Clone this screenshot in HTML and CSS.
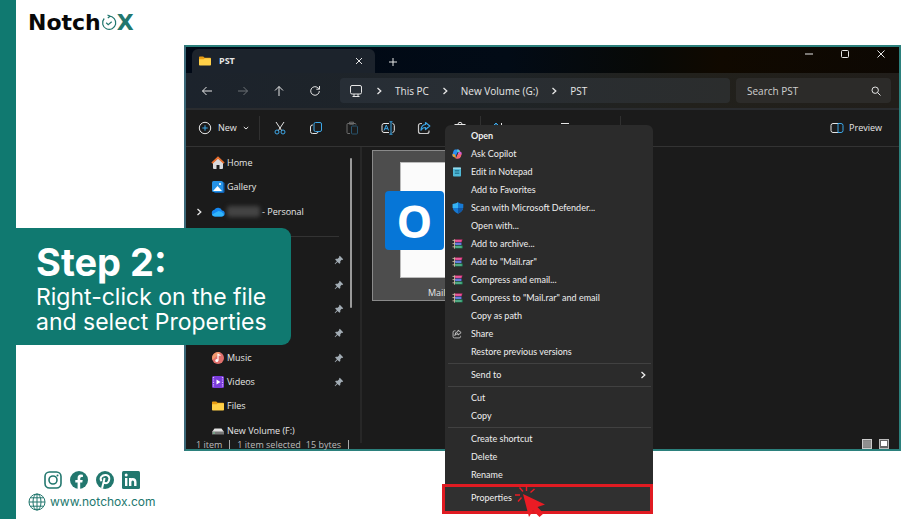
FILE: index.html
```html
<!DOCTYPE html>
<html lang="en">
<head>
<meta charset="utf-8">
<title>NotchoX - Step 2</title>
<link rel="stylesheet" href="styles.css">
</head>
<body>
<svg class="defs" aria-hidden="true">
  <symbol id="chev" viewBox="0 0 8 8"><path d="M2.500 1 5.800 4 2.500 7" fill="none" stroke="currentColor" stroke-width="1.300"/></symbol>
  <symbol id="folder" viewBox="0 0 12 10"><path d="M0 1.200Q0 .4.8.4h3.400l1.400 1.400h5.600q.8 0 .8.8V5H0z" fill="#e89c12"/><path d="M0 3.200h4.600l1.200-1h5.400q.8 0 .8.8v5.800q0 .8-.8.8H.8Q0 9.600 0 8.800z" fill="#ffd048"/></symbol>
  <symbol id="pin" viewBox="0 0 10 10"><path d="M5.800.8 9.200 4.200 8.400 4.900 7.700 4.800 6.300 6.300 6.300 8.100 5.400 8.800 3.500 6.900 1.100 9.200.7 8.800 2.900 6.300 1.100 4.500 1.900 3.700 3.700 3.700 5.200 2.200 5.100 1.500z" fill="#a3adb5"/></symbol>
  <symbol id="rar" viewBox="0 0 11 10"><path d="M3 .6h7.500l-1 2.600H3z" fill="#e0307c"/><path d="M3 3.600h6.500v2.500H3z" fill="#3b63d8"/><path d="M3 6.600h7.500v2.700H3z" fill="#1f9f66"/><path d="M4 1.900h5.200M4 5h5.200M4 8h5.500" stroke="#e8c7e0" stroke-width=".5"/><path d="M2.500.3v9.400M.5 1.400h3M.5 4.600h3M.5 7.800h3" stroke="#cdb9a6" stroke-width=".9"/></symbol>
  <symbol id="share" viewBox="0 0 14 14"><path d="M5 2.500H3.500a2 2 0 0 0-2 2v6a2 2 0 0 0 2 2h6.500a2 2 0 0 0 2-2V9.500" fill="none" stroke="#c8c8c8" stroke-width="1.200"/><path d="M8.500 1.500 12.800 5 8.500 8.500V6.500Q5.500 6.500 4 9.200 4.200 3.800 8.500 3.500z" fill="none" stroke="var(--accent)" stroke-width="1.200" stroke-linejoin="round"/></symbol>
</svg>
<div class="page">
  <header class="brand" aria-label="NotchoX">
    <span class="brand-name">Notch</span>
    <svg class="brand-clock" viewBox="0 0 16 16"><path d="M8 1.200A6.600 6.600 0 1 1 3 3.700" fill="none" stroke="#22776e" stroke-width="1.200"/><path d="M6.500 0 9 1.300 6.800 3M5.200 7.800l2 1.900 3.500-3" fill="none" stroke="#22776e" stroke-width="1.200"/><path d="M2.400 5.500 3 3.700" stroke="#22776e"/></svg>
    <span class="brand-x">X</span>
  </header>

  <main class="window">
    <div class="titlebar">
      <div class="tab">
        <svg class="i12"><use href="#folder"/></svg><strong>PST</strong>
        <button class="tab-close" aria-label="Close tab"><svg class="i8 line" viewBox="0 0 8 8"><path d="m1 1 6 6M7 1 1 7"/></svg></button>
      </div>
      <button class="tab-new" aria-label="New tab"><svg class="i8 line" viewBox="0 0 8 8"><path d="M4 0v8M0 4h8"/></svg></button>
      <div class="controls">
        <button aria-label="Minimize"><svg class="i8 line" viewBox="0 0 8 8"><path d="M0 4h8"/></svg></button>
        <button aria-label="Maximize"><svg class="i8 line" viewBox="0 0 8 8"><rect x=".5" y=".5" width="7" height="7" rx="1"/></svg></button>
        <button aria-label="Close"><svg class="i8 line" viewBox="0 0 8 8"><path d="m.5.5 7 7M7.500.5l-7 7"/></svg></button>
      </div>
    </div>

    <nav class="navbar" aria-label="Location">
      <div class="arrows">
        <button aria-label="Back"><svg class="i12 line" viewBox="0 0 12 12"><path d="M11 6H1.500M5.500 2l-4 4 4 4"/></svg></button>
        <button aria-label="Forward" class="dim"><svg class="i12 line" viewBox="0 0 12 12"><path d="M1 6h9.500M6.500 2l4 4-4 4"/></svg></button>
        <button aria-label="Up"><svg class="i12 line" viewBox="0 0 12 12"><path d="M6 11V1.500M2 5.500l4-4 4 4"/></svg></button>
        <button aria-label="Refresh"><svg class="i12 line" viewBox="0 0 12 12"><path d="M10.300 6A4.300 4.300 0 1 1 8.800 2.700L10.300 4M10.500 1v3.200H7.300"/></svg></button>
      </div>
      <div class="address">
        <svg class="i14 line" viewBox="0 0 14 14"><rect x="1.500" y="1.500" width="11" height="8.500" rx="1.500"/><path d="M5 10v2M9 10v2M3.500 12.500h7"/></svg>
        <svg class="i8"><use href="#chev"/></svg><a href="#pc">This PC</a>
        <svg class="i8"><use href="#chev"/></svg><a href="#g">New Volume (G:)</a>
        <svg class="i8"><use href="#chev"/></svg><a href="#pst">PST</a>
      </div>
      <div class="search">
        <input type="search" aria-label="Search PST" placeholder="Search PST">
        <svg class="i10 line" viewBox="0 0 10 10"><circle cx="4.200" cy="4.200" r="3.200"/><path d="m6.600 6.600 2.900 2.900"/></svg>
      </div>
    </nav>

    <div class="toolbar">
      <button class="new"><svg class="i14 line" viewBox="0 0 14 14"><circle cx="7" cy="7" r="5.700"/><path class="blue" d="M7 4.300v5.400M4.300 7h5.400"/></svg>New<svg class="i6 line" viewBox="0 0 6 6"><path d="m.8 2 2.200 2 2.200-2"/></svg></button>
      <div class="tools">
        <button aria-label="Cut"><svg class="i14 line" viewBox="0 0 14 14"><path d="m3 1 5.800 8.800M11 1 5.200 9.800"/><g class="blue"><circle cx="4" cy="11" r="2"/><circle cx="10" cy="11" r="2"/></g></svg></button>
        <button aria-label="Copy"><svg class="i14 line" viewBox="0 0 14 14"><path d="M4 4H3.500a2 2 0 0 0-2 2v4.500a2 2 0 0 0 2 2H7a2 2 0 0 0 2-1.500"/><rect class="blue" x="5" y="1.500" width="7.500" height="9" rx="1.500"/></svg></button>
        <button aria-label="Paste" class="dim"><svg class="i14 line" viewBox="0 0 14 14"><path d="M5 12.500H3a1 1 0 0 1-1-1V3.500a1 1 0 0 1 1-1h7a1 1 0 0 1 1 1M4.500 1.200h4v2h-4z"/><rect class="blue" x="6.500" y="5" width="6" height="8" rx="1"/></svg></button>
        <button aria-label="Rename"><svg class="i14 line" viewBox="0 0 14 14"><path d="M8 2.500H3a2 2 0 0 0-2 2v5a2 2 0 0 0 2 2h5M11.500 2.500q1.800.3 1.800 2v5q0 1.700-1.800 2"/><path class="blue" d="M8.500.8h3M10 .8v12.400M8.500 13.200h3M3 9.500 5.300 4l2.300 5.500M3.800 7.700h3"/></svg></button>
        <button aria-label="Share"><svg class="i14 shareblue"><use href="#share"/></svg></button>
        <button aria-label="Delete"><svg class="i14 line" viewBox="0 0 14 14"><path d="M1.500 3.500h11M5 3.300a2 2 0 0 1 4 0M3 3.500l1 9h6l1-9"/></svg></button>
      </div>
      <div class="tools more">
        <button aria-label="Sort"><svg class="i14 line" viewBox="0 0 14 14"><path class="blue" d="M4 12V2L1.500 4.500M4 2l2.500 2.500"/><path d="M9.500 2v10"/></svg></button>
        <button aria-label="View"><svg class="i14 line" viewBox="0 0 14 14"><path d="M3 2.500h8M3 6.500h8M3 10.500h8"/></svg></button>
      </div>
      <button class="preview"><svg class="i14 line" viewBox="0 0 14 14"><path d="M8 2.500H3a2 2 0 0 0-2 2v5a2 2 0 0 0 2 2h5"/><path class="blue" d="M8 2.500h3a2 2 0 0 1 2 2v5a2 2 0 0 1-2 2H8z"/></svg>Preview</button>
    </div>

    <div class="body">
      <aside class="side">
        <ul>
          <li><svg class="i14" viewBox="0 0 14 14"><path d="M2 6.500 7 2l5 4.500V12q0 1-1 1H8.500V9h-3v4H3q-1 0-1-1z" fill="#d9d9dc"/><path d="M1 7.200 7 1.600l6 5.600" fill="none" stroke="#e96f2f" stroke-width="1.800"/></svg>Home</li>
          <li><svg class="i14" viewBox="0 0 14 14"><rect x="3" y="2" width="10.500" height="11" rx="1.500" fill="#1260b0"/><rect x="1" y="1" width="11" height="11" rx="1.500" fill="#2492e6"/><path d="m2 11 4.500-5L11 11z" fill="#fff"/><circle cx="9" cy="4" r="1" fill="#fff"/></svg>Gallery</li>
          <li><svg class="i8 expand"><use href="#chev"/></svg><svg class="i14" viewBox="0 0 14 14"><path d="M4 11.500a3.400 3.400 0 0 1-.6-6.700A4.200 4.200 0 0 1 11 5.500a3 3 0 0 1-.5 6z" fill="#1487f0"/><path d="M4 11.500q-2.500 0-3-2L7.500 6q3 0 5.500 3-.4 2.500-2.500 2.500z" fill="#31b5fb"/></svg><span class="redacted"></span>- Personal</li>
          <li class="rule"></li>
          <li><svg class="i10 pin"><use href="#pin"/></svg></li>
          <li><svg class="i10 pin"><use href="#pin"/></svg></li>
          <li><svg class="i10 pin"><use href="#pin"/></svg></li>
          <li><svg class="i10 pin"><use href="#pin"/></svg></li>
          <li><svg class="i14" viewBox="0 0 14 14"><circle cx="7" cy="7" r="6" fill="#df706c"/><path d="M1.500 9a6 6 0 0 1 8-7.400z" fill="#f09a6d"/><path d="M7 9.500V3.500l2.500 1" fill="none" stroke="#fff" stroke-width="1.200"/><circle cx="5.800" cy="9.500" r="1.500" fill="#fff"/></svg>Music<svg class="i10 pin"><use href="#pin"/></svg></li>
          <li><svg class="i14" viewBox="0 0 14 14"><rect x="1" y="1" width="12" height="12" rx="1.500" fill="#7b3ddb"/><path d="M2.500 2v10M11.500 2v10" stroke="#d9b8ff" stroke-width="1.200" stroke-dasharray="1.200 1.200"/><path d="m5.500 4.500 4 2.500-4 2.500z" fill="#fff"/></svg>Videos<svg class="i10 pin"><use href="#pin"/></svg></li>
          <li><svg class="i12 files"><use href="#folder"/></svg>Files</li>
          <li><svg class="i14" viewBox="0 0 14 14"><path d="M3.500 4.500h7L13 8H1z" fill="#e3e3e3"/><path d="M1 7.500h12v3H1z" fill="#777"/><path d="M2 9h2" stroke="#7bcf9c"/></svg>New Volume (F:)</li>
        </ul>
        <div class="scroll"></div>
      </aside>
      <section class="files-pane">
        <figure class="file">
          <div class="sheet"><span class="outlook">O</span></div>
          <figcaption>Mail.pst</figcaption>
        </figure>
      </section>
    </div>
    <footer class="status">
      <span>1 item</span><i></i><span>1 item selected</span><span class="bytes">15 bytes</span><i></i>
      <svg class="i10 views" viewBox="0 0 10 10"><rect x=".5" y=".5" width="9" height="9" fill="#858585" stroke="#ccc"/><path d="M1 3h8M1 5h8M1 7h8" stroke="#aaa" stroke-width=".6"/></svg>
      <svg class="i10" viewBox="0 0 10 10"><rect x=".5" y=".5" width="9" height="9" fill="#666" stroke="#bbb"/><rect x="2" y="2" width="6" height="5" fill="#fff"/></svg>
    </footer>

    <div class="menu" role="menu">
      <button role="menuitem"><b>Open</b></button>
      <button role="menuitem"><svg class="i10" viewBox="0 0 10 10"><path d="M3 .5h3.500L5 5.500 3.500 8H2Q0 8 .3 6L1.500 2Q2 .5 3 .5z" fill="#2a8ff0"/><path d="M6 .5q1.500 0 2 2L9 3q1 .3.700 2L8.500 8Q8 9.500 6.500 9.500H4L6.500 3z" fill="#d85bd0"/><path d="M.5 5 3 5.500 4 9.500Q2.500 9 2.500 8 .3 8 .5 5z" fill="#f6a329"/><path d="M5 .5q2.500 0 3 2L5.500 4z" fill="#53d0d0"/><path d="m6 5 3.500.5-1 2.500L6 9.500H4z" fill="#f36b62"/><path d="M5.600 3.300 6.500 3 4.700 6.800 3.700 7z" fill="#2b2b2b"/></svg>Ask Copilot</button>
      <button role="menuitem"><svg class="i10" viewBox="0 0 10 10"><rect x="1" y=".5" width="8" height="9" rx=".8" fill="#4fb9d8"/><path d="M1 1.200h8" stroke="#b9e8f4"/><path d="M2.800 3.500h4.500M2.800 5h4.500M2.800 6.500h4.500" stroke="#17627e" stroke-width=".7"/></svg>Edit in Notepad</button>
      <button role="menuitem">Add to Favorites</button>
      <button role="menuitem"><svg class="i12" viewBox="0 0 12 12"><path d="M6 .3Q8 1.800 11.300 2v3.500Q11 9.500 6 11.700 1 9.500.7 5.500V2Q4 1.800 6 .3z" fill="#1679d3"/><path d="M6 .3V6H.7V2Q4 1.800 6 .3z" fill="#36b2f2"/><path d="M6 6h5.200Q10.500 9.700 6 11.700z" fill="#1257a3"/></svg>Scan with Microsoft Defender...</button>
      <button role="menuitem">Open with...</button>
      <button role="menuitem"><svg class="i11"><use href="#rar"/></svg>Add to archive...</button>
      <button role="menuitem"><svg class="i11"><use href="#rar"/></svg>Add to "Mail.rar"</button>
      <button role="menuitem"><svg class="i11"><use href="#rar"/></svg>Compress and email...</button>
      <button role="menuitem"><svg class="i11"><use href="#rar"/></svg>Compress to "Mail.rar" and email</button>
      <button role="menuitem">Copy as path</button>
      <button role="menuitem"><svg class="i10"><use href="#share"/></svg>Share</button>
      <button role="menuitem">Restore previous versions</button>
      <hr>
      <button role="menuitem">Send to<svg class="i8 sub"><use href="#chev"/></svg></button>
      <hr>
      <button role="menuitem">Cut</button>
      <button role="menuitem">Copy</button>
      <hr>
      <button role="menuitem">Create shortcut</button>
      <button role="menuitem">Delete</button>
      <button role="menuitem">Rename</button>
      <button role="menuitem" class="target">Properties
        <svg class="cursor" viewBox="0 0 30 32"><path d="M8 8 30 18.500 22.500 21 28.500 27.500 24.500 31 18 24.500 14 31z" fill="#ea1c24"/><path d="M11.500 0V5M4.500 1.500 8 5.500M19.500 3l-4 3.500M0 9h5M6.500 11.500 3 15.500" fill="none" stroke="#ea1c24" stroke-width="1.400"/></svg></button>
    </div>
  </main>

  <footer class="contact">
    <div class="social">
      <a href="#instagram" aria-label="Instagram"><svg class="i18" viewBox="0 0 18 18"><rect x="1" y="1" width="16" height="16" rx="4.500" fill="none" stroke="#22776e" stroke-width="1.600"/><circle cx="9" cy="9" r="4" fill="none" stroke="#22776e" stroke-width="1.600"/><circle cx="13.500" cy="4.500" r="1" fill="#22776e"/></svg></a>
      <a href="#facebook" aria-label="Facebook"><svg class="i18" viewBox="0 0 18 18"><circle cx="9" cy="9" r="9" fill="#22776e"/><path d="M7.600 18v-6.400H5.300V9h2.300V7q0-3.500 3.300-3.500l2 .2v2.200h-1.300q-1.400 0-1.400 1.500V9h2.500l-.4 2.600h-2.100V18z" fill="#fff"/></svg></a>
      <a href="#pinterest" aria-label="Pinterest"><svg class="i18" viewBox="0 0 18 18"><circle cx="9" cy="9" r="9" fill="#22776e"/><path d="M6 17.500 8.600 7M5.600 10.200Q3.800 8 5.300 5.800 7 3.700 9.800 3.900q3.700.5 3.500 4-.5 4.200-3.300 4.300-1.700 0-2.300-1.300" fill="none" stroke="#fff" stroke-width="2"/></svg></a>
      <a href="#linkedin" aria-label="LinkedIn"><svg class="i18" viewBox="0 0 18 18"><rect width="18" height="18" rx="1.500" fill="#22776e"/><path d="M4.200 7v8M8.200 7v8M8.200 11q0-2.800 2.500-2.800T13.300 11v4" fill="none" stroke="#fff" stroke-width="2.400"/><circle cx="4.200" cy="4.100" r="1.500" fill="#fff"/></svg></a>
    </div>
    <a class="site" href="#site"><svg class="i18" viewBox="0 0 18 18"><g fill="none" stroke="#22776e"><circle cx="9" cy="9" r="8"/><ellipse cx="9" cy="9" rx="4" ry="8"/><path d="M9 1v16M1 9h16M2.500 4.800h13M2.500 13.200h13"/></g></svg>www.notchox.com</a>
  </footer>

  <section class="step">
    <h1>Step 2:</h1>
    <p>Right-click on the file<br>and select Properties</p>
  </section>
</div>
</body>
</html>
```
FILE: styles.css
```css
* { box-sizing: border-box; }
body { margin: 0; background: #fff; font-family: "Open Sans", "Noto Sans", sans-serif; font-size: 10px; line-height: 14px; color: #e6e6e6; }
button { background: none; border: 0; padding: 0; margin: 0; font: inherit; color: inherit; display: flex; align-items: center; }
a { color: inherit; text-decoration: none; }
ul { list-style: none; margin: 0; padding: 0; }
svg { flex: none; display: block; overflow: visible; }
.defs { position: absolute; width: 0; height: 0; }
.i6 { width: 6px; height: 6px; }
.i8 { width: 8px; height: 8px; }
.i10 { width: 10px; height: 10px; }
.i11 { width: 11px; height: 10px; }
.i12 { width: 12px; height: 12px; }
.i14 { width: 14px; height: 14px; }
.i18 { width: 18px; height: 18px; }
.line { fill: none; stroke: currentColor; }

.page { --accent: #ddd; position: relative; min-height: 100vh; display: flex; flex-direction: column; border-left: 16px solid #107970; }

.brand { height: 45px; padding-left: 12px; display: flex; align-items: center; font-family: "DejaVu Sans", sans-serif; font-weight: bold; font-size: 22px; line-height: 24px; color: #080808; }
.brand-clock { width: 16px; height: 16px; }
.brand-x { color: #22776e; }

.window { position: relative; flex: 1; min-height: 0; margin: 0 21px 0 168px; border: 2px solid #2b807c; border-left-color: #3b6878; background: #1b1b1b; display: flex; flex-direction: column; }
.titlebar { height: 26px; display: flex; background: linear-gradient(90deg, #000815, #020b16 45%, #080906 65%, #100900 75%, #0d0803); }
.tab { width: 183px; margin: 2px 0 0 6px; padding: 0 12px 0 7px; border-radius: 6px 6px 0 0; background: #1c232c; display: flex; align-items: center; gap: 8px; }
.tab strong { font-size: 9px; }
.tab-close { margin-left: auto; }
.tab-new { margin: 4px 0 0 14px; }
.controls { margin-left: auto; height: 14px; padding-right: 14px; display: flex; gap: 28px; }

.navbar { height: 37px; padding: 0 8px 0 15px; border-bottom: 2px solid #2a2c2f; background: linear-gradient(90deg, #1c232c, #1f2427 45%, #22211c 70%, #211e1a); display: flex; align-items: center; gap: 6px; }
.arrows { width: 133px; display: flex; gap: 24px; }
.dim { opacity: .4; }
.address, .search { height: 25px; border-radius: 4px; display: flex; align-items: center; }
.address { flex: 1; padding-left: 9px; gap: 12px; background: linear-gradient(90deg, #272e36, #2b2d2d); }
.search { width: 155px; padding: 0 10px 0 11px; background: #2c2b29; }
.search input { flex: 1; min-width: 0; padding: 0; border: 0; outline: 0; background: none; font: inherit; color: inherit; }
.search input::placeholder { color: #cfcfcf; opacity: 1; }

.toolbar { height: 37px; border-bottom: 1px solid #333; padding: 0 17px 0 12px; display: flex; align-items: center; font-size: 9px; font-weight: 500; }
.toolbar .blue { stroke: #3ca7e8; }
.new { width: 61px; gap: 6px; }
.tools { display: flex; gap: 22px; padding: 5px 13px; border-left: 1px solid #303030; }
.tools.more { gap: 52px; padding: 5px 48px 5px 11px; border-right: 1px solid #303030; }
.shareblue { --accent: #3ca7e8; }
.preview { margin-left: auto; gap: 5px; }

.body { flex: 1; min-height: 0; display: flex; font-size: 9px; }
.side { width: 176px; padding: 4px 8px 0 10px; margin-bottom: -5px; border-right: 2px solid #272727; display: flex; }
.side ul { flex: 1; display: flex; flex-direction: column; }
.side li { position: relative; flex: 1; padding: 0 4px 0 15px; display: flex; align-items: center; gap: 2px; }
.side .files { margin: 0 1px; }
.expand { position: absolute; left: -1px; }
.redacted { width: 33px; height: 11px; border-radius: 3px; background: #444; filter: blur(2px); }
.pin { margin-left: auto; }
.rule::after { content: ""; flex: 1; margin-right: 5px; border-top: 1px solid #333; }
.scroll { width: 2px; height: 150px; margin: 7px 0 0 2px; border-radius: 1px; background: #9a9a9a; }
.files-pane { flex: 1; padding: 3px 10px; }
.file { width: 148px; height: 151px; margin: 0; padding: 11px 0 0 27px; border: 1px solid #8a8a8a; background: #4d4d4d; }
.sheet { width: 90px; height: 116px; border: 1px solid #bbb; background: #fbfbfb; display: flex; align-items: center; }
.outlook { flex: none; width: 59px; height: 59px; margin-left: -16px; border-radius: 4px; background: #0676d7; color: #fff; font: bold 45px/59px "Open Sans", sans-serif; text-align: center; }
.file figcaption { margin: 8px 0 0 28px; }

.status { position: relative; height: 11px; padding: 1px 10px 0; display: flex; align-items: flex-start; gap: 7px; color: #bdbdbd; font-size: 9px; line-height: 12px; }
.status i { width: 1px; height: 9px; margin-top: 1px; background: #aaa; }
.status .bytes { margin-left: -2px; }
.status .views { margin-left: auto; }

.menu { position: absolute; left: 259px; top: 78px; width: 208px; padding-top: 2px; border-radius: 6px 6px 4px 4px; background: #2b2b2b; color: #efefef; font-family: Lato, "Open Sans", sans-serif; font-size: 9px; }
.menu button { position: relative; width: 100%; height: 18px; padding-left: 26px; }
.menu button > svg:first-child { position: absolute; left: 7px; }
.menu button > svg.sub { position: absolute; left: auto; right: 6px; }
.menu hr { margin: 2px 2px 2px 3px; border: 0; border-top: 1px solid #414141; }
.menu .target { width: 211px; height: 30px; margin-left: -3px; padding-bottom: 2px; border: 3px solid #e01b22; background: #303030; }
.menu button.target > svg.cursor { position: absolute; left: 70px; top: -1px; width: 30px; height: 32px; }

.contact { height: 68px; padding: 20px 0 0 12px; color: #22776e; }
.social { padding-left: 16px; display: flex; gap: 8px; }
.site { margin-top: 4px; display: flex; align-items: center; gap: 4px; font: 12px/18px Inter, sans-serif; }

.step { position: absolute; left: -16px; top: 228px; width: 291px; height: 117px; padding: 12px 0 0 36px; border-radius: 0 9px 9px 0; background: #107970; color: #fff; }
.step h1 { margin: 0; font: bold 38px/44px Inter, sans-serif; }
.step p { margin: 1px 0 0; font: 23px/25px Inter, sans-serif; white-space: nowrap; }
```
